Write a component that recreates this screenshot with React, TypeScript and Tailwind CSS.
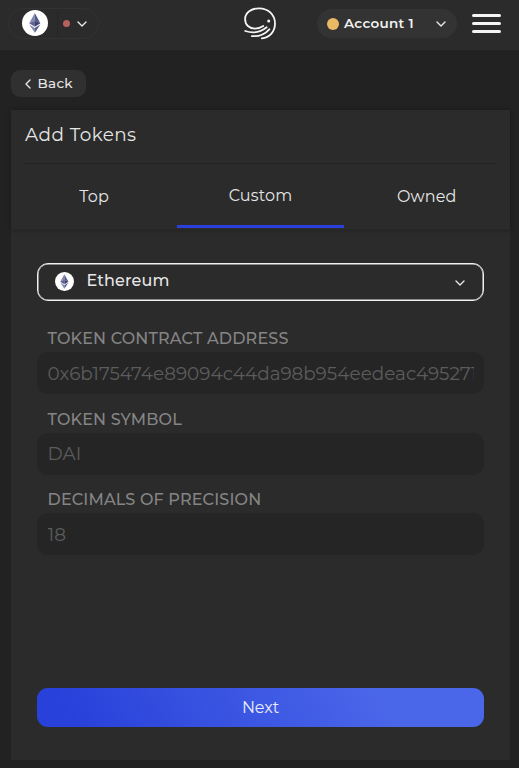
import { useState } from "react";
import clsx from "clsx";

const tabs = [
	{ id: "top", label: "Top" },
	{ id: "custom", label: "Custom" },
	{ id: "owned", label: "Owned" },
];

const fields = [
	{
		label: "TOKEN CONTRACT ADDRESS",
		placeholder: "0x6b175474e89094c44da98b954eedeac495271d0f",
	},
	{ label: "TOKEN SYMBOL", placeholder: "DAI" },
	{ label: "DECIMALS OF PRECISION", placeholder: "18" },
];

function EthIcon({ className }: { className?: string }) {
	return (
		<svg viewBox="0 0 26 26" className={className}>
			<circle cx="13" cy="13" r="13" fill="#fff" />
			<path d="M12.800 3 7.200 13.200 12.800 10.700z" fill="#8389ae" />
			<path d="M12.800 3v7.700l5.600 2.500z" fill="#555b88" />
			<path d="M7.200 13.200 12.800 10.700v6z" fill="#5c6294" />
			<path d="M12.800 10.700v6l5.600-3.500z" fill="#3c4170" />
			<path d="M7.200 14.500 12.800 18v4.800z" fill="#8389ae" />
			<path d="M18.400 14.500 12.800 18v4.800z" fill="#555b88" />
		</svg>
	);
}

function Chevron({ className }: { className?: string }) {
	return (
		<svg
			viewBox="0 0 10 6"
			className={className}
			fill="none"
			stroke="currentColor"
			strokeWidth="1.4"
			strokeLinecap="round"
			strokeLinejoin="round"
		>
			<path d="m1 1 4 4 4-4" />
		</svg>
	);
}

function Logo() {
	return (
		<svg
			viewBox="0 0 32 33"
			className="h-[33px] w-8"
			fill="none"
			stroke="#f4f4f4"
			strokeWidth="1.8"
			strokeLinecap="round"
		>
			<path d="M19.3 19c-2.800 1.900-5.500 2.600-8.300 2.600C5.300 21.600 1.100 17.800 1.100 12.200 1.100 5.600 7.400 1.300 15 1.300c9.400 0 16 6.500 16 15.200 0 8-5.200 14-13.200 14.900" />
			<path d="M1.200 24c7.500 2.400 15.500 1.200 21.500-3.700" />
			<path d="M7.800 29.100c6.900.5 13.200-1.900 17.500-6.800" />
			<circle cx="24.700" cy="14" r="1.500" fill="#f4f4f4" stroke="none" />
		</svg>
	);
}

function Header() {
	return (
		<header className="flex h-[50px] shrink-0 items-start bg-[#2b2b2b] pl-2 pr-[18px]">
			<button
				type="button"
				className="mt-2 flex h-[31px] w-[91px] items-center rounded-full border border-[#323232] pl-[13px]"
			>
				<EthIcon className="-mt-0.5 size-[26px]" />
				<span className="ml-[8.500px] h-6 w-px bg-[#252525]" />
				<span className="ml-[5px] size-[7px] rounded-full bg-[#b8605c]" />
				<Chevron className="ml-[7px] h-[6px] w-[10px] text-[#e8e8e8]" />
			</button>
			<div className="ml-[145px] mt-[7px]">
				<Logo />
			</div>
			<button
				type="button"
				className="ml-[41px] mt-[9px] flex h-[29px] w-[140px] items-center rounded-full bg-[#333] pl-[10px] pr-[11px]"
			>
				<span className="size-3 rounded-full bg-[#e9b963]" />
				<span className="ml-[5px] whitespace-nowrap text-[13.500px] font-semibold tracking-[0.3px] text-[#f2f2f2]">
					Account 1
				</span>
				<Chevron className="ml-auto h-[6px] w-[10px] text-[#e8e8e8]" />
			</button>
			<button
				type="button"
				aria-label="Menu"
				className="ml-auto mt-[14px] flex w-[29.500px] flex-col gap-[5px]"
			>
				<span className="h-[3px] rounded-full bg-[#f4f4f4]" />
				<span className="h-[3px] rounded-full bg-[#f4f4f4]" />
				<span className="h-[3px] rounded-full bg-[#f4f4f4]" />
			</button>
		</header>
	);
}

export default function App() {
	const [active, setActive] = useState("custom");

	return (
		<div className="flex h-screen flex-col overflow-hidden bg-[#222] font-['Montserrat','Inter',sans-serif] text-[#e6e6e6]">
			<Header />
			<button
				type="button"
				className="ml-[11px] mt-5 flex h-[27px] w-[75px] shrink-0 items-center rounded-[9px] bg-[#303030] pl-[14px]"
			>
				<svg
					viewBox="0 0 6 10"
					className="h-[10px] w-[6px]"
					fill="none"
					stroke="currentColor"
					strokeWidth="1.4"
					strokeLinecap="round"
					strokeLinejoin="round"
				>
					<path d="M5 1 1 5l4 4" />
				</svg>
				<span className="ml-[6.500px] text-[13.500px] font-medium tracking-[0.3px]">
					Back
				</span>
			</button>

			<main className="mb-2 ml-[11px] mr-[9px] mt-[13px] flex flex-1 flex-col bg-[#2b2b2b]">
				<div className="h-[120px] shrink-0 border-b border-[#272727] shadow-[0_0_4px_rgba(0,0,0,0.3)]">
					<div className="mx-[13px] h-[54px] border-b border-[#242424] pl-px pt-[11px]">
						<h1 className="text-[18.400px] leading-7 tracking-[0.45px]">
							Add Tokens
						</h1>
					</div>
					<div className="flex h-[64px]">
						{tabs.map((tab) => (
							<button
								key={tab.id}
								type="button"
								onClick={() => setActive(tab.id)}
								className={clsx(
									"flex-1 pt-0.5 text-[16px] tracking-[0.15px]",
									active === tab.id && "border-b-[3px] border-[#2a3fdb]",
								)}
							>
								{tab.label}
							</button>
						))}
					</div>
				</div>

				<div className="flex flex-1 flex-col px-[26px] pb-[33px] pt-[33px]">
					<button
						type="button"
						className="flex h-[38px] items-center rounded-[11px] border border-[#f0f0f0] pl-[17px] pr-[18px] shadow-[inset_0_0_0_0.5px_#f0f0f0]"
					>
						<EthIcon className="-mt-px size-[19px]" />
						<span className="-mt-[3px] ml-[12.500px] text-[16px] font-medium tracking-[0.15px]">
							Ethereum
						</span>
						<Chevron className="ml-auto mt-0.5 h-[6px] w-[10px]" />
					</button>

					{/* Token details */}
					<div className="mt-[25px]">
						{fields.map((field) => (
							<label key={field.label} className="block h-[80.500px]">
								<span className="block h-[26px] whitespace-nowrap pl-[10.500px] text-[16px] font-medium leading-[25px] tracking-[0.17px] text-[#858585]">
									{field.label}
								</span>
								<input
									type="text"
									placeholder={field.placeholder}
									className="block h-[42px] w-full rounded-[11px] bg-[#252525] px-[10.500px] text-[18.400px] outline-none placeholder:text-[#5c5c5c]"
								/>
							</label>
						))}
					</div>

					<button
						type="button"
						className="mt-auto h-[39px] rounded-[11px] bg-[linear-gradient(60deg,#2841da_8%,#4b67e9_78%)] pt-px text-[16px] tracking-[-0.1px] text-[#e9ecfb]"
					>
						Next
					</button>
				</div>
			</main>
		</div>
	);
}
